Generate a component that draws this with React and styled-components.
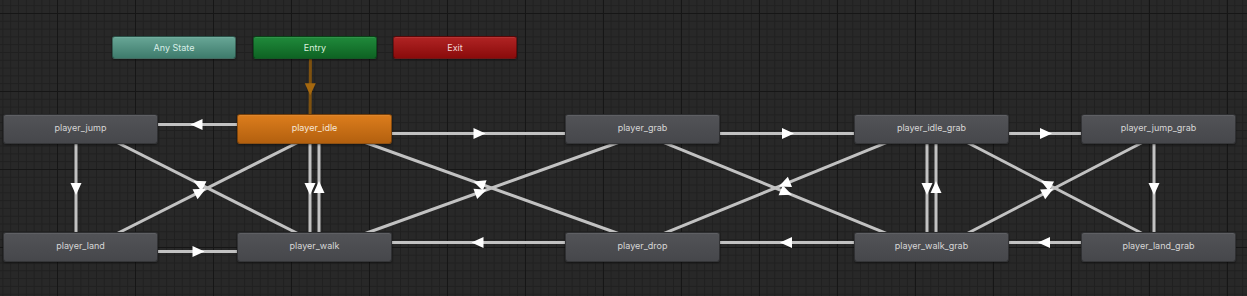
import React from 'react';
import styled, { createGlobalStyle, css } from 'styled-components';

const GlobalStyle = createGlobalStyle`
  html, body {
    margin: 0;
    padding: 0;
    background: #282828;
  }
  body {
    font-family: Inter, "Liberation Sans", sans-serif;
  }
`;

// unity-ish animator grid: fine lines every 7.8px, heavy every 78px
const Canvas = styled.div`
  position: relative;
  width: 1247px;
  height: 296px;
  overflow: hidden;
  background-color: #282828;
  background-image:
    linear-gradient(to right, #161616 1px, transparent 1px),
    linear-gradient(to bottom, #161616 1px, transparent 1px),
    linear-gradient(to right, #202020 1px, transparent 1px),
    linear-gradient(to bottom, #202020 1px, transparent 1px);
  background-size: 78px 78px, 78px 78px, 7.8px 7.8px, 7.8px 7.8px;
  background-position: 57px 13px;
`;

const Wires = styled.svg`
  position: absolute;
  left: 0;
  top: 0;
`;

const kinds = {
  state: css`
    background: linear-gradient(#525357, #46474b);
    color: #d6d6d6;
  `,
  default: css`
    background: linear-gradient(#dc7d1d, #b3600f);
    color: #f6e7d8;
  `,
  any: css`
    background: linear-gradient(#68a696, #3e7b6c);
    color: #d9efe8;
  `,
  entry: css`
    background: linear-gradient(#208a3b, #0e6323);
    color: #d9f0dd;
  `,
  exit: css`
    background: linear-gradient(#b02424, #8a0b0b);
    color: #f3d7d7;
  `,
};

const Node = styled.div`
  position: absolute;
  left: ${(p) => p.$x}px;
  top: ${(p) => p.$y}px;
  width: ${(p) => p.$w}px;
  height: ${(p) => p.$h}px;
  box-sizing: border-box;
  display: flex;
  justify-content: center;
  align-items: ${(p) => (p.$small ? 'center' : 'flex-start')};
  padding-top: ${(p) => (p.$small ? 0 : 7)}px;
  border-radius: 3px;
  border: 1px solid rgba(0, 0, 0, 0.35);
  box-shadow: 0 1px 2px rgba(0, 0, 0, 0.45), inset 0 1px 0 rgba(255, 255, 255, 0.08);
  font-size: 9px;
  line-height: 11px;
  white-space: nowrap;
  ${(p) => kinds[p.$kind]}
`;

const W = 155;
const H = 30;

const NODES = {
  any: { x: 112, y: 36, w: 124, h: 23, label: 'Any State', kind: 'any', small: true },
  entry: { x: 253, y: 36, w: 124, h: 23, label: 'Entry', kind: 'entry', small: true },
  exit: { x: 393, y: 36, w: 124, h: 23, label: 'Exit', kind: 'exit', small: true },
  jump: { x: 3, y: 114, label: 'player_jump' },
  idle: { x: 237, y: 114, label: 'player_idle', kind: 'default' },
  grab: { x: 565, y: 114, label: 'player_grab' },
  idleGrab: { x: 854, y: 114, label: 'player_idle_grab' },
  jumpGrab: { x: 1081, y: 114, label: 'player_jump_grab' },
  land: { x: 3, y: 232, label: 'player_land' },
  walk: { x: 237, y: 232, label: 'player_walk' },
  drop: { x: 565, y: 232, label: 'player_drop' },
  walkGrab: { x: 854, y: 232, label: 'player_walk_grab' },
  landGrab: { x: 1081, y: 232, label: 'player_land_grab' },
};

const TRANSITIONS = [
  ['entry', 'idle', 'entry'],
  ['idle', 'jump'],
  ['idle', 'grab'],
  ['grab', 'idleGrab'],
  ['idleGrab', 'jumpGrab'],
  ['jump', 'land'],
  ['idle', 'walk'],
  ['walk', 'idle'],
  ['idleGrab', 'walkGrab'],
  ['walkGrab', 'idleGrab'],
  ['jumpGrab', 'landGrab'],
  ['land', 'walk'],
  ['drop', 'walk'],
  ['walkGrab', 'drop'],
  ['landGrab', 'walkGrab'],
  ['walk', 'jump'],
  ['land', 'idle'],
  ['drop', 'idle'],
  ['walk', 'grab'],
  ['grab', 'walkGrab'],
  ['idleGrab', 'drop'],
  ['landGrab', 'idleGrab'],
  ['walkGrab', 'jumpGrab'],
];

const center = (n) => {
  const w = n.w || W;
  const h = n.h || H;
  return [n.x + w / 2, n.y + h / 2];
};

// lines run centre to centre, pushed 4.5px to the right-hand side of travel
const Transition = ({ from, to, tone }) => {
  const [ax, ay] = center(NODES[from]);
  const [bx, by] = center(NODES[to]);
  const len = Math.hypot(bx - ax, by - ay);
  const dx = (bx - ax) / len;
  const dy = (by - ay) / len;
  const px = -dy;
  const py = dx;
  const off = 4.5;
  const x1 = ax + px * off;
  const y1 = ay + py * off;
  const x2 = bx + px * off;
  const y2 = by + py * off;
  const mx = (x1 + x2) / 2;
  const my = (y1 + y2) / 2;
  const tip = [mx + dx * 7, my + dy * 7];
  const b1 = [mx - dx * 5 + px * 5.5, my - dy * 5 + py * 5.5];
  const b2 = [mx - dx * 5 - px * 5.5, my - dy * 5 - py * 5.5];
  const isEntry = tone === 'entry';
  return (
    <g>
      <line
        x1={x1}
        y1={y1}
        x2={x2}
        y2={y2}
        stroke={isEntry ? '#7e510f' : '#c2c2c2'}
        strokeWidth={3}
      />
      <polygon
        points={[tip, b1, b2].map((p) => p.join(',')).join(' ')}
        fill={isEntry ? '#a5680f' : '#ffffff'}
      />
    </g>
  );
};

export default function App() {
  return (
    <>
      <GlobalStyle />
      <Canvas>
        <Wires width="1247" height="296" viewBox="0 0 1247 296">
          {TRANSITIONS.map(([a, b, tone]) => (
            <Transition key={`${a}-${b}`} from={a} to={b} tone={tone} />
          ))}
        </Wires>
        {Object.entries(NODES).map(([key, n]) => (
          <Node
            key={key}
            $x={n.x}
            $y={n.y}
            $w={n.w || W}
            $h={n.h || H}
            $small={n.small}
            $kind={n.kind || 'state'}
          >
            {n.label}
          </Node>
        ))}
      </Canvas>
    </>
  );
}
